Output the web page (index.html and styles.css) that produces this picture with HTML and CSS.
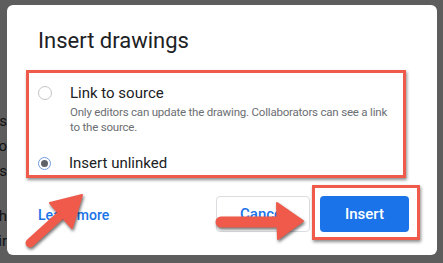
FILE: index.html
```html
<!DOCTYPE html>
<html>
<head>
<meta charset="utf-8">
<link rel="stylesheet" href="styles.css">
</head>
<body>
<div class="page">
  <div class="behind">
    <span class="frag f1">docs</span>
    <span class="frag f2">to</span>
    <span class="frag f3">is</span>
    <span class="frag f4">each</span>
    <span class="frag f5">their</span>
  </div>
  <div class="dialog">
    <h1 class="title">Insert drawings</h1>
    <div class="options">
      <div class="option">
        <span class="radio"></span>
        <span class="label">Link to source</span>
      </div>
      <p class="desc">Only editors can update the drawing. Collaborators can see a link to the source.</p>
      <div class="option option2">
        <span class="radio checked"><span class="dot"></span></span>
        <span class="label">Insert unlinked</span>
      </div>
    </div>
    <div class="footer">
      <span class="learn">Learn more</span>
      <span class="btn cancel">Cancel</span>
      <span class="insert-frame"><span class="btn insert">Insert</span></span>
    </div>
  </div>
</div>
<svg class="arrows" width="443" height="263" viewBox="0 0 443 263">
  <g class="arrow">
    <line x1="30" y1="243" x2="62" y2="214" stroke-width="9" stroke-linecap="round"/>
    <polygon points="50,203 82,195 72,228" stroke-width="2" stroke-linejoin="round"/>
  </g>
  <g class="arrow">
    <line x1="221" y1="222" x2="282" y2="222" stroke-width="11" stroke-linecap="round"/>
    <polygon points="277,203 303,221 278,239" stroke-width="2" stroke-linejoin="round"/>
  </g>
</svg>
</body>
</html>
```
FILE: styles.css
```css
html, body {
  margin: 0;
  padding: 0;
}
body {
  width: 443px;
  height: 263px;
  background: #5d5d5d;
  overflow: hidden;
  font-family: Roboto, "Liberation Sans", sans-serif;
  position: relative;
}
.page {
  display: flex;
  height: 263px;
  box-sizing: border-box;
  padding: 5px 6px 8px 0;
}
.behind {
  width: 7px;
  flex: none;
  display: flex;
  flex-direction: column;
  overflow: hidden;
  padding-top: 107px;
}
.frag {
  display: flex;
  justify-content: flex-end;
  white-space: nowrap;
  font-size: 15px;
  line-height: 18px;
  color: #111;
}
.f2, .f3 { margin-top: 7px; }
.f4 { margin-top: 27px; }
.f5 { margin-top: 7px; }
.dialog {
  flex: 1;
  background: #fff;
  border-radius: 6px;
  padding: 22px 0 0 0;
  display: flex;
  flex-direction: column;
}
.title {
  margin: 0 0 15px 31px;
  font-size: 22px;
  line-height: 28px;
  font-weight: 400;
  color: #202124;
}
.options {
  margin-left: 19px;
  width: 365px;
  border: 3px solid #ef5a4b;
  box-shadow: 1px 2px 3px rgba(0,0,0,0.45);
  padding: 10px 0 2px 9px;
}
.option {
  display: flex;
  align-items: center;
  height: 20px;
}
.option2 {
  margin-top: 18px;
}
.radio {
  width: 12px;
  height: 12px;
  border: 1px solid #c4c4c4;
  border-radius: 50%;
  margin-right: 18px;
  display: flex;
  align-items: center;
  justify-content: center;
}
.radio.checked {
  border: 1.5px solid #6f9be0;
  width: 11px;
  height: 11px;
}
.dot {
  width: 7px;
  height: 7px;
  border-radius: 50%;
  background: #5f6368;
}
.label {
  font-size: 15px;
  color: #202124;
}
.desc {
  margin: 2px 0 0 32px;
  width: 322px;
  font-size: 11.5px;
  letter-spacing: -0.2px;
  line-height: 15px;
  color: #6b6e72;
}
.footer {
  display: flex;
  align-items: flex-start;
  margin-top: 4px;
  padding: 0 17px 0 31px;
}
.learn {
  margin-top: 24px;
  font-size: 14px;
  line-height: 18px;
  font-weight: 500;
  color: #1a73e8;
}
.btn {
  height: 36px;
  box-sizing: border-box;
  border-radius: 4px;
  display: flex;
  align-items: center;
  justify-content: center;
  font-size: 15px;
  font-weight: 500;
}
.cancel {
  margin-left: auto;
  margin-top: 14px;
  margin-right: 2px;
  width: 94px;
  border: 1px solid #dadce0;
  color: #1a73e8;
}
.insert-frame {
  border: 3px solid #ef5a4b;
  box-shadow: 1px 2px 3px rgba(0,0,0,0.45);
  padding: 8px 8px 5px 5px;
  margin-top: 3px;
  background: #fff;
}
.insert {
  width: 89px;
  background: #1a73e8;
  color: #fff;
}
.arrows {
  position: absolute;
  left: 0;
  top: 0;
  pointer-events: none;
}
.arrow {
  fill: #ef5a4b;
  stroke: #ef5a4b;
  filter: drop-shadow(1px 2px 1.5px rgba(0,0,0,0.55));
}
```
